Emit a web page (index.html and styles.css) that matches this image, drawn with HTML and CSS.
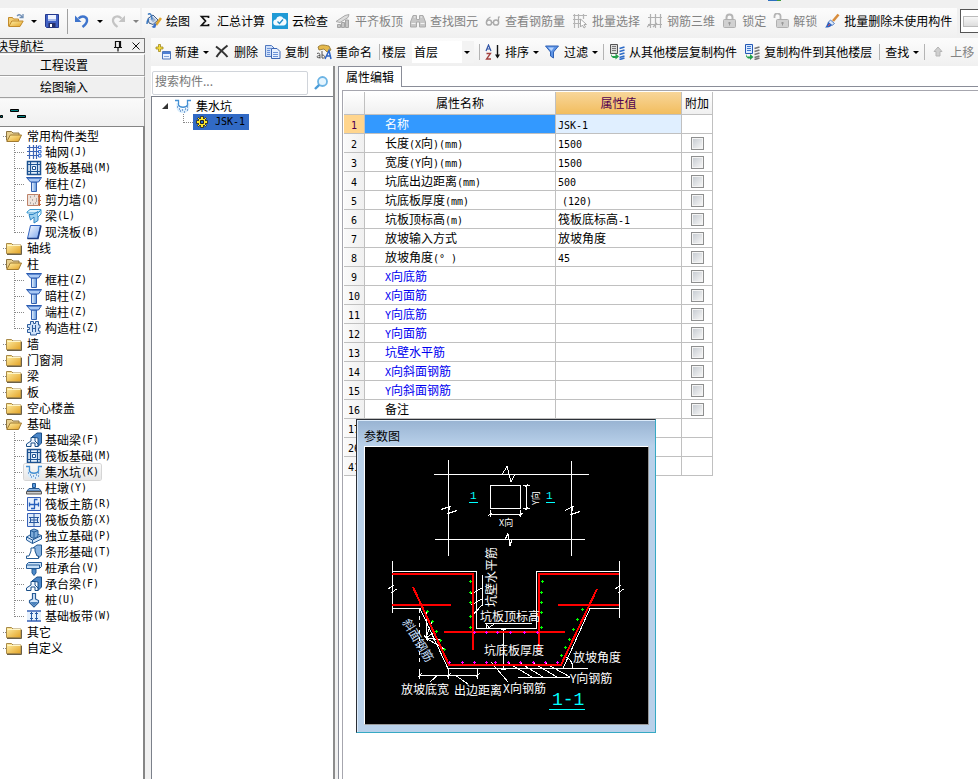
FILE: index.html
```
<!DOCTYPE html>
<html lang="zh-CN">
<head>
  <meta charset="UTF-8">
  <meta name="viewport" content="width=device-width, initial-scale=1.0">
  <title>属性编辑</title>
  <link rel="stylesheet" href="styles.css">
</head>
<body>
  <!-- Icon set -->
  <svg class="sprite" aria-hidden="true">
    <defs>
      <linearGradient id="gFolder" x1="0" y1="0" x2="1" y2="1"><stop offset="0" stop-color="#fff0a8"/><stop offset="1" stop-color="#e3a224"/></linearGradient>
      <linearGradient id="gBlue" x1="0" y1="0" x2="1" y2="0"><stop offset="0" stop-color="#eef6ff"/><stop offset="1" stop-color="#5c94dc"/></linearGradient>
      <linearGradient id="gSlab" x1="0" y1="0" x2="1" y2="1"><stop offset="0" stop-color="#fff"/><stop offset="1" stop-color="#78a4ee"/></linearGradient>
    </defs>
    <symbol id="i-folder" viewBox="0 0 16 16"><path d="M.5 3.500h5l1.500 1.500h8v8.500H.5z" fill="url(#gFolder)" stroke="#a98a48"/><path d="M1.500 5.500h13" stroke="#fff6c8"/><path d="M1 14.500h14.500V6" fill="none" stroke="#6b6048"/></symbol>
    <symbol id="i-folder-open" viewBox="0 0 16 16"><path d="M.5 12.500v-9h5l1.500 1.500h6v2" fill="#e8cf8e" stroke="#8d7440"/><path d="M.8 13.500l3.500-6.500h11.200l-3 6.500z" fill="url(#gFolder)" stroke="#a07a30"/></symbol>
    <symbol id="i-open" viewBox="0 0 16 16"><path d="M.5 13V4.500h4l1 1.500h5v3" fill="#f4cf74" stroke="#c28b2c"/><path d="M.8 13.500l3-5.500h11.400l-3.200 5.500z" fill="url(#gFolder)" stroke="#c28b2c"/><path d="M9 3c2-2 4-1.500 5 1m1-3v3.500h-3.500" fill="none" stroke="#6f8eb5" stroke-width="1.300"/></symbol>
    <symbol id="i-save" viewBox="0 0 16 16"><path d="M1.500 1.500h13v13h-12l-1-1z" fill="#4262c4" stroke="#24398f"/><path d="M4 2h8v6H4z" fill="#eef3ff"/><path d="M4 6h8v2H4z" fill="#a9bcec"/><path d="M4.500 10h7v4.500h-7z" fill="#27316b"/><path d="M6 11h2v3H6z" fill="#fff"/></symbol>
    <symbol id="i-undo" viewBox="0 0 16 16"><path d="M4.500 5.500c4-4 9-1.500 8.500 2.500-.3 2.500-2 4-4.500 6" fill="none" stroke="#3e74cc" stroke-width="2.400"/><path d="M1 2.500V9h6.500z" fill="#3e74cc"/></symbol>
    <symbol id="i-redo" viewBox="0 0 16 16"><path d="M11.500 5.500c-4-4-9-1.500-8.500 2.500.3 2.500 2 4 4.500 6" fill="none" stroke="#c4c4c4" stroke-width="2.200"/><path d="M15 2.500V9H8.500z" fill="#c4c4c4"/></symbol>
    <symbol id="i-draw" viewBox="0 0 16 16"><path d="M2 5.500L7 2l5 5-5 4.500L3 10z" fill="#dfe7f2" stroke="#3d5b88"/><path d="M4 6l3-2 3 3-3 2.500z" fill="#9eb5d4"/><path d="M2 1.500c2-2 4 0 4 5M3 6c-2 1-2 3-2 5" fill="none" stroke="#3a78c0" stroke-width="1.400"/><path d="M15 5l-5 7" stroke="#e0a62e" stroke-width="2.600"/><path d="M10.500 10.500l-1 4c-2 1-3 0-4-1 2 0 2-2 3-3z" fill="#3b6fc9"/></symbol>
    <symbol id="i-sum" viewBox="0 0 16 16"><path d="M11.500 5V3.500H4.500L8.500 8l-4 4.500h7V11" fill="none" stroke="#111" stroke-width="1.700"/></symbol>
    <symbol id="i-cloud" viewBox="0 0 16 16"><path d="M0 0h16v16H0z" fill="#1f9ad6"/><path d="M4.500 12.500a3 3 0 0 1-.5-6 4 4 0 0 1 7.500-1 3.600 3.600 0 0 1 .5 7z" fill="#f4fbff"/><path d="M5.500 8.500l2 2 3.500-4" fill="none" stroke="#1f8ac6" stroke-width="1.300"/></symbol>
    <symbol id="i-align" viewBox="0 0 16 16"><path d="M1 8.500l9-6 4-1-1 3-8 5z" fill="#ddd" stroke="#aaa"/><path d="M2.500 11.500h3v3h-3zM6.500 9.500h3v5h-3zM10.500 7h3v7.500h-3z" fill="#c5c5c5" stroke="#a5a5a5"/></symbol>
    <symbol id="i-find" viewBox="0 0 16 16"><path d="M3 2.500h3.500v4h3v-4H13L15.500 9v5h-6V9h-3v5h-6V9z" fill="#c7c7c7" stroke="#aaa"/><path d="M1.500 10.500h4m5 0h4M4 4h1.500m5 0H12" stroke="#f3f3f3"/></symbol>
    <symbol id="i-glasses" viewBox="0 0 16 16"><circle cx="4" cy="9.500" r="2.600" fill="none" stroke="#aaa" stroke-width="1.500"/><circle cx="11" cy="9.500" r="2.600" fill="none" stroke="#aaa" stroke-width="1.500"/><path d="M6.500 9.500h2M1.500 9C2 6 3 5 5.500 4M13.500 9V4h1.500" fill="none" stroke="#aaa" stroke-width="1.200"/></symbol>
    <symbol id="i-batch" viewBox="0 0 16 16"><path d="M1 2.500h14M1 6.500h8M1 10.500h7M2.500 1v14M6.500 1v14M11.500 1v5" stroke="#b5b5b5" stroke-width="1.200"/><path d="M8.500 6v8l2-2 1.500 3 1.500-1-1.500-2.500h2.500z" fill="#fff" stroke="#aaa"/></symbol>
    <symbol id="i-grid3d" viewBox="0 0 16 16"><path d="M1 4.500h14M1 11.500h14M3.500 1v14M8.500 1v14M13.500 1v14M0 14l4-4M6 14l4-4" stroke="#b0b0b0" stroke-width="1.200"/></symbol>
    <symbol id="i-lock" viewBox="0 0 16 16"><path d="M4.500 7V4.500a3 3 0 0 1 6 0V7" fill="none" stroke="#b5b5b5" stroke-width="2"/><rect x="1.500" y="6.500" width="12" height="8" rx="1" fill="#d1d1d1" stroke="#b0b0b0"/><path d="M7.500 9v3.500M6 10h3" stroke="#999"/></symbol>
    <symbol id="i-unlock" viewBox="0 0 16 16"><path d="M7.500 7V4a3 3 0 0 0-6-1v2" fill="none" stroke="#b5b5b5" stroke-width="1.800"/><rect x="3.500" y="6.500" width="12" height="8" rx="1" fill="#d1d1d1" stroke="#b0b0b0"/><path d="M9.500 9v3.500M8 10h3" stroke="#999"/></symbol>
    <symbol id="i-brush" viewBox="0 0 16 16"><path d="M14.500 1.500L9 8" stroke="#d88c3c" stroke-width="2.600"/><path d="M6.500 7l4 3.500-2.500 2-4-3z" fill="#dce9fa" stroke="#5b82c2"/><path d="M4.500 9l3.500 3c-2 2.500-4 2.500-7 2.500 1.500-1 2-4 3.500-5.500z" fill="#2f62bf"/><path d="M4 13l2-2" stroke="#e34b4b"/></symbol>
    <symbol id="i-new" viewBox="0 0 16 16"><path d="M7.500 7.500h8v7.500h-8z" fill="#eaf2ff" stroke="#4e75ba"/><path d="M8 8h7v2H8z" fill="#4e7fd4"/><path d="M9 12.500h5" stroke="#86a4d8"/><path d="M3.500.5h2v2.500H8v2H5.500v2.500h-2V5H1V3h2.500z" fill="#f7df3c" stroke="#a0851e" stroke-width=".8"/></symbol>
    <symbol id="i-delete" viewBox="0 0 16 16"><path d="M2 2.500c4 3 8 6 11.500 10.500M13.500 1.500C9 5 5 9 2.500 13" fill="none" stroke="#333" stroke-width="2"/></symbol>
    <symbol id="i-copy" viewBox="0 0 16 16"><path d="M.5 1.500h6l2.500 2.500v8.500H.5z" fill="#cfe0fa" stroke="#5379be"/><path d="M6.500 4.500h5.500l3 3v7H6.500z" fill="#e6f0ff" stroke="#3d66b3"/><path d="M2 4.500h4M2 6.500h3M8 8.500h5M8 10.500h5M8 12.500h5M2 8.500h3M2 10.500h3" stroke="#6c93d8"/></symbol>
    <symbol id="i-rename" viewBox="0 0 16 16"><path d="M2 3c3-3 6-2 11-1l2 4-4 2-3-3-5 1z" fill="#e5b94c" stroke="#8a6d2c" stroke-width=".8"/><path d="M1 9.500c3-1 3 0 3 5M4 11.500c-4 0-4 3 0 2M6 7v7c3 1 4-3 0-3" fill="none" stroke="#555"/><path d="M9 15l4-8.500L15 15m-4.500-3H15" fill="none" stroke="#2c63c4" stroke-width="1.500"/></symbol>
    <symbol id="i-sort" viewBox="0 0 16 16"><path d="M1 7l2.500-6L6 7M2 5h3" fill="none" stroke="#3154a6" stroke-width="1.200"/><path d="M1.500 9.500h4L1.500 15h4.500" fill="none" stroke="#a3403e" stroke-width="1.300"/><path d="M12.500 1v12" stroke="#111" stroke-width="1.400"/><path d="M10 10.500l2.500 4 2.500-4z" fill="#111"/></symbol>
    <symbol id="i-filter" viewBox="0 0 16 16"><path d="M1.500 2h13l-5 6v6l-3-2V8z" fill="#5d94e6" stroke="#2f61b4"/><path d="M4 3.500h6L7.500 7z" fill="#b8d5ff"/></symbol>
    <symbol id="i-from" viewBox="0 0 16 16"><path d="M1.500.5h7v9h-7z" fill="#ddd" stroke="#555"/><path d="M3 2.500h4M3 4.500h4M3 6.500h4" stroke="#777"/><path d="M3 10v2h3.500v-2.500L10 12.500l-3.500 3V14H4l-2-2z" fill="#22a04c"/><path d="M10.500 4.500l5-1.500M10.500 7.500l5-1.500M10.500 10.500l5-1.500M10.500 13.500l5-1.500M10.500 15.500l5-1.500" stroke="#2d6bc7" stroke-width="1.700"/></symbol>
    <symbol id="i-to" viewBox="0 0 16 16"><path d="M1.500.5h7v9h-7z" fill="#dcebff" stroke="#2459b5"/><path d="M3 2.500h4M3 4.500h4M3 6.500h4" stroke="#3f77cd"/><path d="M3 10v2.500h3V10l3.500 3L6 16v-1.500H4l-2-2z" fill="#22a04c"/><path d="M10.500 4.500l5-1.500M10.500 7.500l5-1.500M10.500 10.500l5-1.500M10.500 13.500l5-1.500M10.500 15.500l5-1.500" stroke="#777" stroke-width="1.700"/></symbol>
    <symbol id="i-up" viewBox="0 0 16 16"><path d="M8 3l4 4.500h-2V12H6V7.500H4z" fill="#cfcfcf" stroke="#b5b5b5"/></symbol>
    <symbol id="i-search" viewBox="0 0 16 16"><circle cx="9.500" cy="6.500" r="4.500" fill="#e5f5ff" stroke="#6db4e4" stroke-width="1.800"/><path d="M6.200 9.800L2 14" stroke="#4a9cd8" stroke-width="2.400"/></symbol>
    <symbol id="i-pin" viewBox="0 0 16 16"><path d="M5.500 9.500V3.500h5v6M9.500 4v5M4 9.500h8M8 10v3.500" fill="none" stroke="#111" stroke-width="1.200"/></symbol>
    <symbol id="i-close" viewBox="0 0 16 16"><path d="M4.500 4.500l7 7m0-7l-7 7" stroke="#111"/></symbol>
    <symbol id="i-axis" viewBox="0 0 16 16"><path d="M1 3.500h12M1 7.500h12M1 11.500h12M3.500 1v14M7.500 1v14M10.500 1v14" stroke="#3c64b4" stroke-width="1.200"/><path d="M12.500 2h2.500v2.500h-2.500zM12.500 6.500H15V9h-2.500zM12.500 10.500H15V13h-2.500z" fill="#fff" stroke="#2f68d3"/></symbol>
    <symbol id="i-raft" viewBox="0 0 16 16"><path d="M1.500 1.500h13v13h-13z" fill="#e4f1fc" stroke="#1c5291" stroke-width="1.500"/><path d="M4.500 2v12M11.500 2v12M2 4.500h12M2 11.500h12" stroke="#1c5291" stroke-width="1.200"/><path d="M6.500 6.500h3v3h-3z" fill="#fff" stroke="#1c5291"/></symbol>
    <symbol id="i-column" viewBox="0 0 16 16"><path d="M5.500 6h5v9.500h-5z" fill="url(#gBlue)" stroke="#3260b0"/><path d="M.5 1.500h15l-3 4.500h-8z" fill="#a9c9f5" stroke="#2b5bb0"/><path d="M2 2.500h12" stroke="#5c88cf"/></symbol>
    <symbol id="i-wall" viewBox="0 0 16 16"><path d="M1.500 2.500h11v11h-11z" fill="#eee3dc" stroke="#bd8269"/><path d="M4 5h1M8 4h1M6 8h1M10 7h1M4 11h1M9 11h1M7 12h1M10 9h1" stroke="#777"/><path d="M13.500 2v12M12 4.500h3M12 8.500h3M12 12.500h3" stroke="#c4663c"/></symbol>
    <symbol id="i-beam" viewBox="0 0 16 16"><path d="M1 4l3-2.500h11L12 5H1z" fill="#d9f0fc" stroke="#3898d0"/><path d="M3 6.500h4l5-3v9l-4 2.500V9L4.500 12z" fill="#9cd0ef" stroke="#2c84c4"/><path d="M12 5l3-3v4l-3 3" fill="#e8f7ff" stroke="#3898d0"/></symbol>
    <symbol id="i-slab" viewBox="0 0 16 16"><path d="M4.500 1.500h10l-3 13h-10z" fill="url(#gSlab)" stroke="#2e62c0"/><path d="M1.500 14.500h10.500l3-13" fill="none" stroke="#1d3f87" stroke-width="1.500"/></symbol>
    <symbol id="i-tie" viewBox="0 0 16 16"><path d="M4.500 1.500h3v2h2v-2h3v3.500H14v3h-1.500v3H14v2.500h-3.500v1.500h-6v-2.500h-3v-3h2v-2h-2v-3h3z" fill="#cfe2f8" stroke="#2c5c9c"/><path d="M6.500 5v7M9.500 5v7M6.500 8.500h3" stroke="#2c5c9c"/></symbol>
    <symbol id="i-fbeam" viewBox="0 0 16 16"><path d="M6 5l5-4h4.500v10L12 14.500V6z" fill="#4a86c8" stroke="#194d86"/><path d="M.5 14.500v-2.500L5 9V5.500h4V9l3 3v2.500H9V11H5v3.500z" fill="#eef6ff" stroke="#194d86"/></symbol>
    <symbol id="i-pit" viewBox="0 0 16 16"><path d="M1.500 5H3v3c0 2 2 3 5 3s5-1 5-3V5h1.500v4c0 4-3.500 6-6.500 6s-6.500-2-6.500-6z" fill="#d8edfc"/><path d="M0 2.500h3.500V7c1 3 8 3 9 0V2.500H16" fill="none" stroke="#4390d4" stroke-width="1.300"/><path d="M2 9h1M4 11h1M7 12h1M10 11h1M12 9h1M5 13h1M9 14h1M12 12h1" stroke="#275dae" stroke-width="1.200"/></symbol>
    <symbol id="i-cap" viewBox="0 0 16 16"><path d="M6.500 3.500h3v4h-3z" fill="#5999dc" stroke="#245791"/><path d="M3 8.500h10l2 2.500H1z" fill="#8fb8e5" stroke="#245791"/><path d="M.5 11.500h15v2.500H.5z" fill="#ccc" stroke="#555"/></symbol>
    <symbol id="i-main" viewBox="0 0 16 16"><path d="M1.500 1.500h13v13h-13z" fill="#e5effc" stroke="#3761b7"/><path d="M3 8.500h10M8.500 3.500v9M8 3.500h3.500M5 12.500h4M3.500 6.500v4M12.500 6.500v4" stroke="#245fbc" stroke-width="1.300"/></symbol>
    <symbol id="i-neg" viewBox="0 0 16 16"><path d="M1.500 1.500h13v13h-13z" fill="#dfebfa" stroke="#3761b7"/><path d="M3 5.500h10M3 10.500h10M4.500 5v3M11.500 5v3M4.500 8v3M11.500 8v3M8 2v12M4 8h8" stroke="#28589f"/></symbol>
    <symbol id="i-iso" viewBox="0 0 16 16"><path d="M.5 9l7-4 8 2.500v3.500L6.500 15.500l-6-3.500z" fill="#d3e5f8" stroke="#235a96"/><path d="M.5 9l6 3 9-4.500M6.500 12v3.500" fill="none" stroke="#235a96"/><path d="M4.500 2.500L8 1l4 1.500v6L8 10.500 4.500 9z" fill="#7dabd9" stroke="#235a96"/><path d="M4.500 2.500l3.500 1.500 4-1.500M8 4v6" fill="none" stroke="#235a96"/></symbol>
    <symbol id="i-strip" viewBox="0 0 16 16"><path d="M7 4l4-3h4.500v10L12 14.500z" fill="#87b2df" stroke="#245991"/><path d="M.5 14.500V12H3l2-5V4h4v3l2 5h1.500v2.500z" fill="#fff" stroke="#245991"/></symbol>
    <symbol id="i-pilecap" viewBox="0 0 16 16"><path d="M.5 4.500l2-2h13v4l-2 2H.5z" fill="#c7e0f8" stroke="#235a96"/><path d="M1 5h12.500V8" fill="none" stroke="#235a96"/><path d="M6 9h4v4l-2 2.500L6 13z" fill="#4d8bcb" stroke="#235a96"/></symbol>
    <symbol id="i-pile" viewBox="0 0 16 16"><path d="M6.500 1.500h3v5.500l3 1.500v2L8 15l-4.500-4.500V8.500l3-1.500z" fill="#d5e7fa" stroke="#295d98" stroke-width="1.200"/><path d="M4 10h8L8 14z" fill="#4b82bc"/></symbol>
    <symbol id="i-band" viewBox="0 0 16 16"><path d="M1 3h14v10H1z" fill="#e6f1fd"/><path d="M1 3h14M1 13h14" stroke="#3761b7" stroke-width="1.600"/><path d="M5.500 4v9M10.500 4v9M4 5.500h3M9 5.500h3M4 10.500h3M9 10.500h3" stroke="#285ba6"/></symbol>
    <symbol id="i-gear" viewBox="0 0 16 16"><path d="M6.500 2.500h3v11h-3zM2.500 6.500h11v3h-11zM3.500 4.500l1-1 8 8-1 1zM11.500 3.500l1 1-8 8-1-1z" fill="#ffe92b" stroke="#222" stroke-width=".8"/><path d="M5 5h6v6H5z" fill="#ffe92b"/><path d="M6.500 6.500h3v3h-3z" fill="#2f6cc6" stroke="#222"/></symbol>
  </svg>

  <div class="app">
    <div class="top-strip"><i></i></div>

    <div class="top-bars">
      <div class="toolbar quick">
        <button class="drop" aria-label="打开"><svg><use href="#i-open"/></svg><span class="caret"></span></button>
        <button aria-label="保存"><svg><use href="#i-save"/></svg></button>
        <span class="sep tall"></span>
        <button class="drop" aria-label="撤销"><svg><use href="#i-undo"/></svg><span class="caret"></span></button>
        <button class="drop off" aria-label="恢复"><svg><use href="#i-redo"/></svg><span class="caret"></span></button>
      </div>
      <div class="toolbar main">
        <button><svg><use href="#i-draw"/></svg>绘图</button>
        <button><svg><use href="#i-sum"/></svg>汇总计算</button>
        <button><svg><use href="#i-cloud"/></svg>云检查</button>
        <button class="off"><svg><use href="#i-align"/></svg>平齐板顶</button>
        <button class="off"><svg><use href="#i-find"/></svg>查找图元</button>
        <button class="off"><svg><use href="#i-glasses"/></svg>查看钢筋量</button>
        <button class="off"><svg><use href="#i-batch"/></svg>批量选择</button>
        <button class="off"><svg><use href="#i-grid3d"/></svg>钢筋三维</button>
        <button class="off"><svg><use href="#i-lock"/></svg>锁定</button>
        <button class="off"><svg><use href="#i-unlock"/></svg>解锁</button>
        <button><svg><use href="#i-brush"/></svg>批量删除未使用构件</button>
      </div>
      <div class="float-box"><i></i></div>
    </div>

    <div class="workspace">
      <!-- Navigation -->
      <aside class="nav">
        <div class="nav-title">
          <span>块导航栏</span>
          <button aria-label="固定"><svg><use href="#i-pin"/></svg></button>
          <button aria-label="关闭"><svg><use href="#i-close"/></svg></button>
        </div>
        <button class="nav-tab">工程设置</button>
        <button class="nav-tab">绘图输入</button>
        <div class="nav-tools">
          <svg class="levels" viewBox="0 0 30 12"><path d="M.5 6.500h2v2h-2zM10.500.5h8v2h-8zM17.500 6.500h8v2h-8z" fill="#008080" stroke="#000"/></svg>
        </div>
        <ul class="tree" id="navTree"></ul>
      </aside>

      <div class="content">
        <div class="toolbar edit">
          <button class="drop"><svg><use href="#i-new"/></svg>新建<span class="caret"></span></button>
          <button><svg><use href="#i-delete"/></svg>删除</button>
          <button><svg><use href="#i-copy"/></svg>复制</button>
          <button><svg><use href="#i-rename"/></svg>重命名</button>
          <span class="sep tight"></span>
          <label for="floor">楼层</label>
          <span class="floor-select">
            <select id="floor"><option>首层</option></select>
            <span class="caret"></span>
          </span>
          <span class="sep"></span>
          <button class="drop"><svg><use href="#i-sort"/></svg>排序<span class="caret"></span></button>
          <button class="drop"><svg><use href="#i-filter"/></svg>过滤<span class="caret"></span></button>
          <span class="sep"></span>
          <button><svg><use href="#i-from"/></svg>从其他楼层复制构件</button>
          <button><svg><use href="#i-to"/></svg>复制构件到其他楼层</button>
          <span class="sep"></span>
          <button class="drop">查找<span class="caret"></span></button>
          <span class="sep"></span>
          <button class="off"><svg><use href="#i-up"/></svg>上移</button>
        </div>

        <div class="panes">
          <section class="components">
            <div class="search">
              <input type="text" placeholder="搜索构件..." aria-label="搜索构件">
              <button aria-label="搜索"><svg><use href="#i-search"/></svg></button>
            </div>
            <div class="component-tree">
              <div class="parent"><span class="expander"></span><svg><use href="#i-pit"/></svg>集水坑</div>
              <div class="leaf"><span class="selected"><svg><use href="#i-gear"/></svg><span class="latin">JSK-1</span></span></div>
            </div>
          </section>

          <section class="properties">
            <div class="tabs"><button class="tab">属性编辑</button></div>
            <div class="sheet">
              <table>
                <thead>
                  <tr><th class="col-no"></th><th class="col-name">属性名称</th><th class="col-value">属性值</th><th class="col-add">附加</th></tr>
                </thead>
                <tbody id="propRows"></tbody>
              </table>
            </div>
          </section>
        </div>
      </div>
    </div>

    <!-- Parameter drawing window -->
    <div class="dialog" role="dialog" aria-labelledby="dialogTitle">
      <div class="dialog-title" id="dialogTitle">参数图</div>
      <svg class="drawing" viewBox="0 0 283 277">
        <!-- plan -->
        <g class="line">
          <path d="M83.500 13v96M206.500 14v95M69 27.500h68l5-8 4 15 4-7h74M70 92.500h70l3-6 2 12 2-6h73"/>
          <path d="M137 27.500h13M140 92.500h7"/>
          <path d="M76 62.500l9-3-2 7 9-3M200 63.500l8-4-2 8 9-3"/>
          <path d="M125.500 38.500h30v23h-30zM125.500 63v7M155.500 63v7M124 67.500h33M123 69l4-3M154 69l4-3M161.500 38v25M158 38.500h7M158 61.500h7M160 40l3-3M160 63l3-3"/>
        </g>
        <text class="small" x="134" y="79">X向</text>
        <text class="small" transform="translate(174 58) rotate(-90)">Y向</text>
        <g class="cyan">
          <text class="mark" x="105" y="52">1</text>
          <text class="mark" x="181" y="52">1</text>
          <path d="M104 55.500h9M181 55.500h9"/>
        </g>
        <!-- section outline -->
        <g class="line">
          <path d="M27.500 114v52M254.500 114v57M27 124.500h84.500v57h60v-57H254M27 161.500h28l28 60h140M198 221.500l27-60h29"/>
          <path d="M23 142l5-3-1 6 5-3M250 142l5-3-1 6 5-3"/>
          <path d="M54.500 162v56" stroke-dasharray="4 3"/>
          <path d="M54 228.500h58M54.500 222v10M83.500 222v10M112.500 222v10M53 230l4-4M82 230l4-4M111 230l4-4M65 235l8-7M90 228l13 9"/>
          <path d="M138.500 181v42M136 182.500h5M136 222.500h5"/>
          <path d="M117.500 128v31M117 141l-11 6M117 152l-11 6M117 158l-11 12"/>
          <path d="M167 176.500h-46l3 4 6-4M121 176v6"/>
          <path d="M61 191l1-27M61 191l6-17M61 191l10-7M61 191l14 2M61 191l18 11M59 188l4 6"/>
          <path d="M126 215l17 20M143 216l24 14M155 216l23 14M168 216l24 14M180 216l25 14M153 230.500h52M201 210q7 4 7 11"/>
        </g>
        <!-- reinforcement -->
        <path class="bar" d="M27 127h81v76M254 127h-80v76M27 158h59M193 158h61M79 185h121"/>
        <path class="bar" d="M48 140l36 78h112l36-76"/>
        <path class="green" id="greenDots"/>
        <path class="magenta" id="magentaDots"/>
        <!-- captions -->
        <text transform="translate(131 160) rotate(-90)">坑壁水平筋</text>
        <text x="115" y="174">坑板顶标高</text>
        <text x="119" y="208">坑底板厚度</text>
        <text x="208" y="215">放坡角度</text>
        <text x="205" y="236">Y向钢筋</text>
        <text x="138" y="246">X向钢筋</text>
        <text x="89" y="248">出边距离</text>
        <text x="36" y="247">放坡底宽</text>
        <text class="tilt" transform="translate(37 175) rotate(59)">斜面钢筋</text>
        <g class="cyan">
          <text class="section" x="187" y="258">1-1</text>
          <path d="M184 262.500h36"/>
        </g>
      </svg>
    </div>
  </div>

  <script>
    const navItems = [
      { name: "常用构件类型", open: true, items: [["axis", "轴网(J)"], ["raft", "筏板基础(M)"], ["column", "框柱(Z)"], ["wall", "剪力墙(Q)"], ["beam", "梁(L)"], ["slab", "现浇板(B)"]] },
      { name: "轴线" },
      { name: "柱", open: true, items: [["column", "框柱(Z)"], ["column", "暗柱(Z)"], ["column", "端柱(Z)"], ["tie", "构造柱(Z)"]] },
      { name: "墙" },
      { name: "门窗洞" },
      { name: "梁" },
      { name: "板" },
      { name: "空心楼盖" },
      { name: "基础", open: true, items: [["fbeam", "基础梁(F)"], ["raft", "筏板基础(M)"], ["pit", "集水坑(K)"], ["cap", "柱墩(Y)"], ["main", "筏板主筋(R)"], ["neg", "筏板负筋(X)"], ["iso", "独立基础(P)"], ["strip", "条形基础(T)"], ["pilecap", "桩承台(V)"], ["fbeam", "承台梁(F)"], ["pile", "桩(U)"], ["band", "基础板带(W)"]] },
      { name: "其它" },
      { name: "自定义" }
    ];

    const props = [
      [1, "名称", "JSK-1"],
      [2, "长度(X向)(mm)", "1500"],
      [3, "宽度(Y向)(mm)", "1500"],
      [4, "坑底出边距离(mm)", "500"],
      [5, "坑底板厚度(mm)", "(120)"],
      [6, "坑板顶标高(m)", "筏板底标高-1"],
      [7, "放坡输入方式", "放坡角度"],
      [8, "放坡角度(° )", "45"],
      [9, "X向底筋", ""],
      [10, "X向面筋", ""],
      [11, "Y向底筋", ""],
      [12, "Y向面筋", ""],
      [13, "坑壁水平筋", ""],
      [14, "X向斜面钢筋", ""],
      [15, "Y向斜面钢筋", ""],
      [16, "备注", ""],
      [17, "", ""],
      [26, "", ""],
      [41, "", ""]
    ];

    // Half-width characters use the monospace face
    function mixed(text) {
      return String(text).replace(/[\x20-\x7e°]+/g, '<span class="latin">$&</span>');
    }

    function icon(name) {
      return `<svg><use href="#i-${name}"/></svg>`;
    }

    // Navigation tree
    document.getElementById("navTree").innerHTML = navItems.map((group) => {
      const children = (group.items || []).map(([ico, text]) =>
        `<li><a href="#" class="${ico === "pit" ? "current" : ""}">${icon(ico)}${mixed(text)}</a></li>`
      ).join("");
      return `<li class="group"><div class="folder">${icon(group.open ? "folder-open" : "folder")}${group.name}</div>${children ? `<ul>${children}</ul>` : ""}</li>`;
    }).join("");

    // Property rows
    document.getElementById("propRows").innerHTML = props.map(([no, name, value]) => {
      const cls = no === 1 ? "active" : no >= 9 && no <= 15 ? "rebar" : "";
      const box = no > 1 && no < 17 ? `<input type="checkbox" aria-label="附加 ${name}">` : "";
      return `<tr class="${cls}"><td class="no">${mixed(no)}</td><td class="name">${mixed(name)}</td><td class="value${no === 5 ? " preset" : ""}">${mixed(value)}</td><td class="add">${box}</td></tr>`;
    }).join("");

    // Bar cross marks
    function crosses(points) {
      return points.map(([x, y]) => `M${x - 1} ${y + 0.5}h3M${x + 0.5} ${y - 1}v3`).join("");
    }

    document.getElementById("greenDots").setAttribute("d", crosses([
      [105, 134], [105, 145], [105, 155], [105, 169], [105, 180],
      [177, 134], [176, 145], [176, 155], [176, 165], [176, 180],
      [62, 164], [67, 174], [71, 184], [75, 193], [79, 202],
      [217, 162], [212, 172], [208, 182], [204, 192], [200, 200], [196, 208]
    ]));
    document.getElementById("magentaDots").setAttribute("d", crosses([
      [109, 185], [121, 185], [132, 185], [145, 185], [159, 185], [172, 185],
      [84, 215], [97, 215], [109, 215], [121, 215], [130, 215], [143, 215], [155, 215], [168, 215], [180, 215], [192, 215]
    ]));
  </script>
</body>
</html>
```

FILE: styles.css
```
* {
  box-sizing: border-box;
}

body {
  margin: 0;
  font: 12px/16px "Noto Sans CJK SC", sans-serif;
  color: #000;
  background: #f0f0f0;
}

button, input, select {
  font: inherit;
  color: inherit;
}

button {
  border: none;
  padding: 0;
  background: none;
  white-space: nowrap;
}

svg {
  width: 16px;
  height: 16px;
  flex: none;
}

.sprite {
  position: absolute;
  width: 0;
  height: 0;
}

.latin {
  font-family: "DejaVu Sans Mono", monospace;
  font-size: 10px;
  line-height: 1;
  white-space: pre;
}

.app {
  position: relative;
  display: flex;
  flex-direction: column;
  height: 100vh;
  overflow: hidden;
}

.top-strip {
  height: 8px;
  flex: none;
  padding-left: 768px;
}

.top-strip i {
  display: block;
  width: 13px;
  height: 1px;
  background: linear-gradient(90deg, #2d6fc0 70%, #3c9a3c 70%);
}

/* Toolbars */
.top-bars {
  display: flex;
  gap: 2px;
  height: 30px;
  flex: none;
}

.toolbar {
  display: flex;
  align-items: center;
  background: linear-gradient(#fcfcfc, #f0f0f0);
  white-space: nowrap;
  overflow: hidden;
}

.toolbar button {
  display: flex;
  align-items: center;
  gap: 4px;
  margin-right: 7px;
  flex: none;
}

.toolbar .off {
  color: #838383;
}

.toolbar label {
  flex: none;
}

.toolbar.quick {
  width: 140px;
  padding: 0 0 4px 8px;
  flex: none;
}

.toolbar.quick button {
  gap: 7px;
}

.toolbar.main {
  flex: 1;
  padding: 0 0 4px 4px;
}

.toolbar.edit {
  height: 28px;
  flex: none;
  margin-left: 5px;
  padding-left: 4px;
}

.toolbar.edit .drop {
  margin-right: 5px;
}

.caret {
  flex: none;
  border: 3px solid transparent;
  border-top-color: currentColor;
  border-bottom: none;
}

.sep {
  flex: none;
  width: 1px;
  height: 16px;
  margin-right: 5px;
  background: #b4b4b4;
}

.sep.tall {
  height: 25px;
  margin-right: 6px;
  background: #a0a0a0;
}

.sep.tight {
  margin-right: 2px;
}

.floor-select {
  display: flex;
  align-items: center;
  width: 62px;
  height: 22px;
  margin: 0 5px 0 6px;
  padding-right: 4px;
  flex: none;
  background: linear-gradient(90deg, #fff 50px, #f3f3f3 50px);
}

.floor-select select {
  flex: 1;
  min-width: 0;
  appearance: none;
  border: none;
  padding: 0 2px;
  background: none;
}

.float-box {
  width: 18px;
  height: 24px;
  margin: 1px 0 0 1px;
  padding: 6px 0 0 2px;
  border: 1px solid #555;
  border-right: none;
  background: #fff;
}

.float-box i {
  display: block;
  height: 11px;
  border: 1px solid #bbb;
  border-right: none;
  background: linear-gradient(#f7f7f7, #ddd);
}

.workspace {
  display: flex;
  flex: 1;
  min-height: 0;
}

/* Navigation */
.nav {
  display: flex;
  flex-direction: column;
  width: 163px;
  margin-left: -17px;
  padding-right: 1px;
  flex: none;
}

.nav-title {
  display: flex;
  align-items: center;
  height: 15px;
  padding-left: 12px;
  border: 1px solid #777;
}

.nav-title span {
  flex: 1;
}

.nav-title button {
  display: flex;
  margin-right: 2px;
}

.nav-title button:last-child {
  margin-right: 0;
}

.nav-tab {
  height: 22px;
  margin-top: 1px;
  border: 1px solid #a0a0a0;
  border-top-color: #fff;
  background: #f0f0f0;
}

.nav-tab + .nav-tab {
  margin-top: 0;
}

.nav-tools {
  height: 27px;
  padding: 10px 0 0 17px;
  margin-top: 1px;
  border-right: 1px solid #999;
  background: linear-gradient(#fafafa, #f0f0f0);
}

.levels {
  display: block;
  width: 30px;
  height: 12px;
}

.tree, .tree ul {
  list-style: none;
  margin: 0;
  padding: 0;
}

.tree {
  flex: 1;
  padding: 1px 0 0 20px;
  border: solid #858585;
  border-width: 1px 2px 0 0;
  background: #fff;
}

.folder {
  display: flex;
  align-items: center;
  gap: 5px;
  height: 16px;
}

.folder::before {
  content: "";
  width: 3px;
  margin-right: -5px;
  border-top: 1px dotted #888;
}

.tree ul {
  margin-left: 11px;
}

.tree ul li {
  display: flex;
  align-items: center;
  height: 16px;
  background: repeating-linear-gradient(#888 0 1px, transparent 1px 2px) 0 0 / 1px 100% no-repeat;
}

.tree ul li:last-child {
  background-size: 1px 8px;
}

.tree ul li::before {
  content: "";
  width: 10px;
  border-top: 1px dotted #888;
}

.tree a {
  display: flex;
  align-items: center;
  height: 16px;
  padding: 0 2px;
  color: #000;
  text-decoration: none;
}

.tree a svg {
  margin-right: 3px;
}

.tree a.current {
  border-radius: 2px;
  box-shadow: 0 0 0 1px #d5d5d5;
  background: linear-gradient(#fafafa, #e6e6e6);
}

/* Content */
.content {
  display: flex;
  flex-direction: column;
  flex: 1;
  min-width: 0;
}

.panes {
  display: flex;
  flex: 1;
  min-height: 0;
  gap: 3px;
  padding-left: 5px;
}

.components {
  display: flex;
  flex-direction: column;
  width: 184px;
  flex: none;
  padding-top: 3px;
  border-right: 2px solid #8c8c8c;
  background: #fff;
}

.search {
  display: flex;
  align-items: center;
  gap: 5px;
  height: 27px;
  padding: 0 4px 0 1px;
}

.search input {
  flex: 1;
  min-width: 0;
  height: 24px;
  padding: 0 2px 4px;
  border: 1px solid #d0d4da;
  border-radius: 2px;
}

.search input::placeholder {
  color: #777;
}

.search button {
  display: flex;
}

.component-tree {
  flex: 1;
  padding-top: 1px;
  border: solid #7b808a;
  border-width: 1px 0 0 1px;
}

.parent {
  display: flex;
  align-items: center;
  height: 16px;
  padding-left: 10px;
}

.parent svg {
  margin: 0 5px 0 7px;
}

.expander {
  border-left: 6px solid transparent;
  border-bottom: 6px solid #333;
}

.leaf {
  display: flex;
  height: 16px;
  padding-left: 31px;
}

.leaf::before {
  content: "";
  width: 9px;
  height: 8px;
  border: dotted #888;
  border-width: 0 0 1px 1px;
}

.selected {
  display: flex;
  align-items: center;
  gap: 5px;
  padding: 0 4px 0 1px;
  background: #316ac5;
}

/* Properties */
.properties {
  display: flex;
  flex-direction: column;
  flex: 1;
  min-width: 0;
  border-left: 1px solid #8a8d98;
  background: #fff;
}

.tabs {
  display: flex;
  height: 21px;
  flex: none;
}

.tabs::after {
  content: "";
  flex: 1;
  border-bottom: 1px solid #8a8d98;
}

.tab {
  width: 63px;
  border: solid #8a8d98;
  border-width: 1px 1px 0 0;
}

.sheet {
  flex: 1;
  margin: 3px 0 0 3px;
  padding: 1px 0 0 1px;
  border: solid #a6a6ae;
  border-width: 1px 0 0 1px;
}

table {
  border-collapse: separate;
  border-spacing: 0;
  table-layout: fixed;
  width: 369px;
}

th, td {
  padding: 0;
  border: solid #c0c0c0;
  border-width: 0 1px 1px 0;
}

th {
  height: 23px;
  font-weight: normal;
  background: linear-gradient(#fff, #f0f0f0);
}

.col-no { width: 21px; }
.col-name { width: 191px; }
.col-add { width: 31px; }

th.col-value {
  width: 126px;
  color: #500050;
  background: linear-gradient(#f8d69a, #f2bd5e);
}

td {
  height: 19px;
  line-height: 18px;
  overflow: hidden;
  white-space: nowrap;
}

.no {
  text-align: center;
  background: linear-gradient(90deg, #fafafa, #f0f0f0);
}

.name {
  padding-left: 20px;
}

.value {
  padding-left: 2px;
}

.value.preset {
  padding-left: 6px;
}

.active .no {
  color: #500050;
  background: #ffd58d;
}

.active .name {
  color: #fff;
  background: #3399ff;
}

.active .value {
  background: #e0efff;
}

.rebar .name {
  color: #0000f0;
}

input[type="checkbox"] {
  appearance: none;
  display: block;
  width: 13px;
  height: 13px;
  margin: 0 auto;
  padding: 1px;
  border: 1px solid #8e8f8f;
  background: linear-gradient(135deg, #c8cdd3, #f5f5f5) content-box, #f4f4f4;
}

/* Parameter drawing window */
.dialog {
  position: absolute;
  left: 356px;
  top: 419px;
  padding: 0 6px 7px 7px;
  border: 1px solid #2b2f36;
  border-right-color: #36a9c4;
  border-bottom-color: #36a9c4;
  background: linear-gradient(#98b3d2, #b9d1ea 26px);
  box-shadow: inset 1px 1px #dcebfa;
}

.dialog-title {
  height: 26px;
  line-height: 31px;
}

.drawing {
  display: block;
  width: 285px;
  height: 279px;
  border: 1px solid #fff;
  border-right-color: #999;
  border-bottom-color: #999;
  background: #000;
}

.drawing text {
  fill: #fff;
  font-size: 12px;
}

.drawing path {
  fill: none;
  shape-rendering: crispEdges;
}

.drawing .line path {
  stroke: #fff;
}

.drawing .small {
  font-size: 9px;
}

.drawing .tilt {
  fill: #c3dcf5;
}

.drawing .cyan path {
  stroke: #00ffff;
}

.drawing .cyan text {
  fill: #00ffff;
}

.drawing .mark {
  font: 11px "Liberation Mono", monospace;
}

.drawing .section {
  font: 18px "Liberation Mono", monospace;
}

.drawing .bar {
  stroke: #ff0000;
  stroke-width: 2;
}

.drawing .green {
  stroke: #00ff00;
}

.drawing .magenta {
  stroke: #ff00ff;
}
```
